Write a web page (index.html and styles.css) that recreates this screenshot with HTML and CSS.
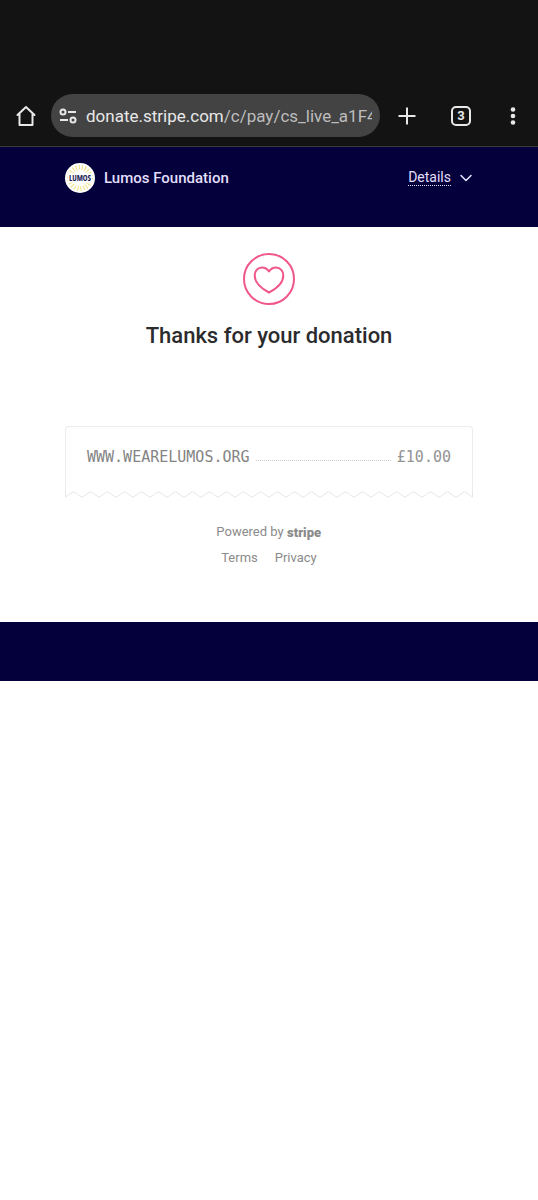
FILE: index.html
```html
<!DOCTYPE html>
<html lang="en">
<head>
<meta charset="utf-8">
<meta name="viewport" content="width=device-width, initial-scale=1">
<title>Lumos Foundation</title>
<link rel="stylesheet" href="styles.css">
</head>
<body>
<div class="browser-bar">
  <button class="icon-button home" type="button" aria-label="Home">
    <svg width="20" height="22" viewBox="0 0 20 22" fill="none" stroke="currentColor" stroke-width="2" stroke-linejoin="round" stroke-linecap="round"><path d="M1.500 10 10 2l8.500 8M3.500 8.500V20h13V8.500"/></svg>
  </button>
  <div class="address">
    <svg class="tune" width="18" height="16" viewBox="0 0 18 16" fill="none" stroke="currentColor" stroke-width="2"><circle cx="4" cy="4" r="2.500"/><path d="M9 4h8M1 12h8"/><circle cx="14" cy="12" r="2.500"/></svg>
    <div class="url"><span class="domain">donate.stripe.com</span>/c/pay/cs_live_a1F4</div>
  </div>
  <button class="icon-button plus" type="button" aria-label="New tab">
    <svg width="18" height="18" viewBox="0 0 18 18" stroke="currentColor" stroke-width="2"><path d="M9 .5v17M.5 9h17"/></svg>
  </button>
  <button class="icon-button tabs" type="button" aria-label="Open tabs"><span class="tab-count">3</span></button>
  <button class="icon-button more" type="button" aria-label="Menu">
    <svg width="6" height="18" viewBox="0 0 6 18" fill="currentColor"><circle cx="3" cy="2.500" r="2.300"/><circle cx="3" cy="9" r="2.300"/><circle cx="3" cy="15.500" r="2.300"/></svg>
  </button>
</div>
<header class="merchant">
  <div class="brand">
    <svg class="logo" width="30" height="30" viewBox="0 0 30 30">
      <circle cx="15" cy="15" r="15" fill="#fff"/>
      <circle cx="15" cy="15" r="10.500" fill="none" stroke="#f2df80" stroke-width="5" stroke-dasharray="1 2"/>
      <path d="M3 10.500h24v9H3z" fill="#fff"/>
      <text class="logo-text" x="15" y="18" text-anchor="middle">LUMOS</text>
    </svg>
    <span class="brand-name">Lumos Foundation</span>
  </div>
  <button class="details" type="button">
    <span class="details-label">Details</span>
    <svg width="14" height="8" viewBox="0 0 14 8" fill="none" stroke="currentColor" stroke-width="1.600" stroke-linecap="round" stroke-linejoin="round"><path d="m2 1.500 5 5 5-5"/></svg>
  </button>
</header>
<main class="content">
  <svg class="heart" width="52" height="52" viewBox="0 0 52 52" fill="none" stroke="currentColor" stroke-width="2"><circle cx="26" cy="26" r="25"/><path d="M26 18.500C24 15.500 21.500 14.500 19 14.500c-4.500 0-7.300 3.500-7.300 8 0 8.500 7.500 13.500 14.300 17 6.800-3.500 14.300-8.500 14.300-17 0-4.500-2.800-8-7.300-8-2.500 0-5 1-7 4z" stroke-linejoin="round"/></svg>
  <h1 class="title">Thanks for your donation</h1>
  <section class="receipt">
    <div class="line">
      <span class="payee">WWW.WEARELUMOS.ORG</span>
      <span class="dots"></span>
      <span class="amount">£10.00</span>
    </div>
    <svg class="tear" height="7" viewBox="0 0 408 7" preserveAspectRatio="none" fill="none" stroke="currentColor">
      <defs><pattern id="tooth" width="17" height="7" patternUnits="userSpaceOnUse"><path d="M-1 6 0 6Q1 6 2 5L7 1.500Q8.500.5 10 1.500L15 5Q16 6 17 6L18 6"/></pattern></defs>
      <rect width="408" height="7" fill="url(#tooth)" stroke="none"/>
      <path d="M.5 0v6M407.500 0v6"/>
    </svg>
  </section>
  <footer class="legal">
    <a class="powered" href="#">Powered by <svg class="stripe" width="35" height="16" viewBox="0 0 35 16" role="img" aria-label="stripe"><text class="stripe-text" x="0" y="13">stripe</text></svg></a>
    <nav class="links"><a href="#">Terms</a><a href="#">Privacy</a></nav>
  </footer>
</main>
<div class="bottom-band"></div>
</body>
</html>
```
FILE: styles.css
```css
* { box-sizing: border-box; }
body {
  margin: 0;
  background: #fff;
  font-family: Roboto, "Liberation Sans", sans-serif;
  color: #2b2b2d;
}
button {
  padding: 0;
  border: 0;
  background: none;
  color: inherit;
  font: inherit;
}
a { color: inherit; text-decoration: none; }
svg { display: block; }

.browser-bar {
  display: flex;
  align-items: center;
  padding: 94px 0 9px;
  background: #131313;
  border-bottom: 1px solid #39393d;
  color: #e8e8e8;
}
.icon-button {
  display: flex;
  align-items: center;
  justify-content: center;
  flex: none;
  width: 54px;
  height: 43px;
}
.home { width: 51px; }
.more { width: 50px; }
.address {
  display: flex;
  align-items: center;
  flex: 1;
  min-width: 0;
  gap: 9px;
  height: 43px;
  padding: 0 8px;
  border-radius: 22px;
  background: #434343;
}
.tune { flex: none; }
.url {
  flex: 1;
  min-width: 0;
  overflow: hidden;
  white-space: nowrap;
  font-size: 17px;
  line-height: 24px;
  color: #bdbdbd;
}
.domain { color: #e8e8e8; }
.tab-count {
  width: 20px;
  height: 20px;
  border: 2px solid;
  border-radius: 5px;
  font-size: 13px;
  font-weight: 700;
  line-height: 16px;
  text-align: center;
}

.merchant {
  display: flex;
  justify-content: space-between;
  align-items: flex-start;
  height: 80px;
  padding: 16px 65px;
  background: #04003c;
  color: #e2dffa;
}
.brand { display: flex; align-items: center; gap: 9px; }
.brand-name { font-size: 15px; font-weight: 500; }
.logo-text {
  font: 700 8px "Liberation Sans Narrow", "Open Sans", sans-serif;
  font-stretch: condensed;
  fill: #1b1c55;
}
.details {
  display: flex;
  align-items: center;
  gap: 8px;
  height: 30px;
  font-size: 14px;
}
.details-label { line-height: 15px; border-bottom: 1px dotted; }

.content {
  display: flex;
  flex-direction: column;
  align-items: center;
  padding: 26px 65px 56px;
}
.heart { color: #f0568c; }
.title {
  margin: 17px 0 76px;
  font-size: 22px;
  font-weight: 500;
  line-height: 28px;
}
.receipt { width: 100%; color: #ececec; }
.line {
  display: flex;
  align-items: center;
  gap: 6px;
  height: 65px;
  padding: 0 21px 5px;
  border: 1px solid;
  border-bottom: 0;
  border-radius: 4px 4px 0 0;
  font-family: "DejaVu Sans Mono", monospace;
  font-size: 15px;
}
.payee { color: #848484; }
.dots { flex: 1; padding-top: 8px; border-bottom: 1px dotted #cccccc; }
.amount { color: #949494; }
.tear { width: 100%; stroke: #e6e6e6; }
.legal {
  display: flex;
  flex-direction: column;
  align-items: center;
  gap: 10px;
  margin-top: 26px;
  font-size: 13px;
  line-height: 16px;
  color: #8b8b8b;
}
.powered { display: flex; gap: 3px; }
.stripe { overflow: visible; }
.stripe-text { font: 900 13px Roboto, sans-serif; fill: #8b8b8b; }
.links { display: flex; gap: 17px; }
.bottom-band { height: 59px; background: #04003c; }
```
